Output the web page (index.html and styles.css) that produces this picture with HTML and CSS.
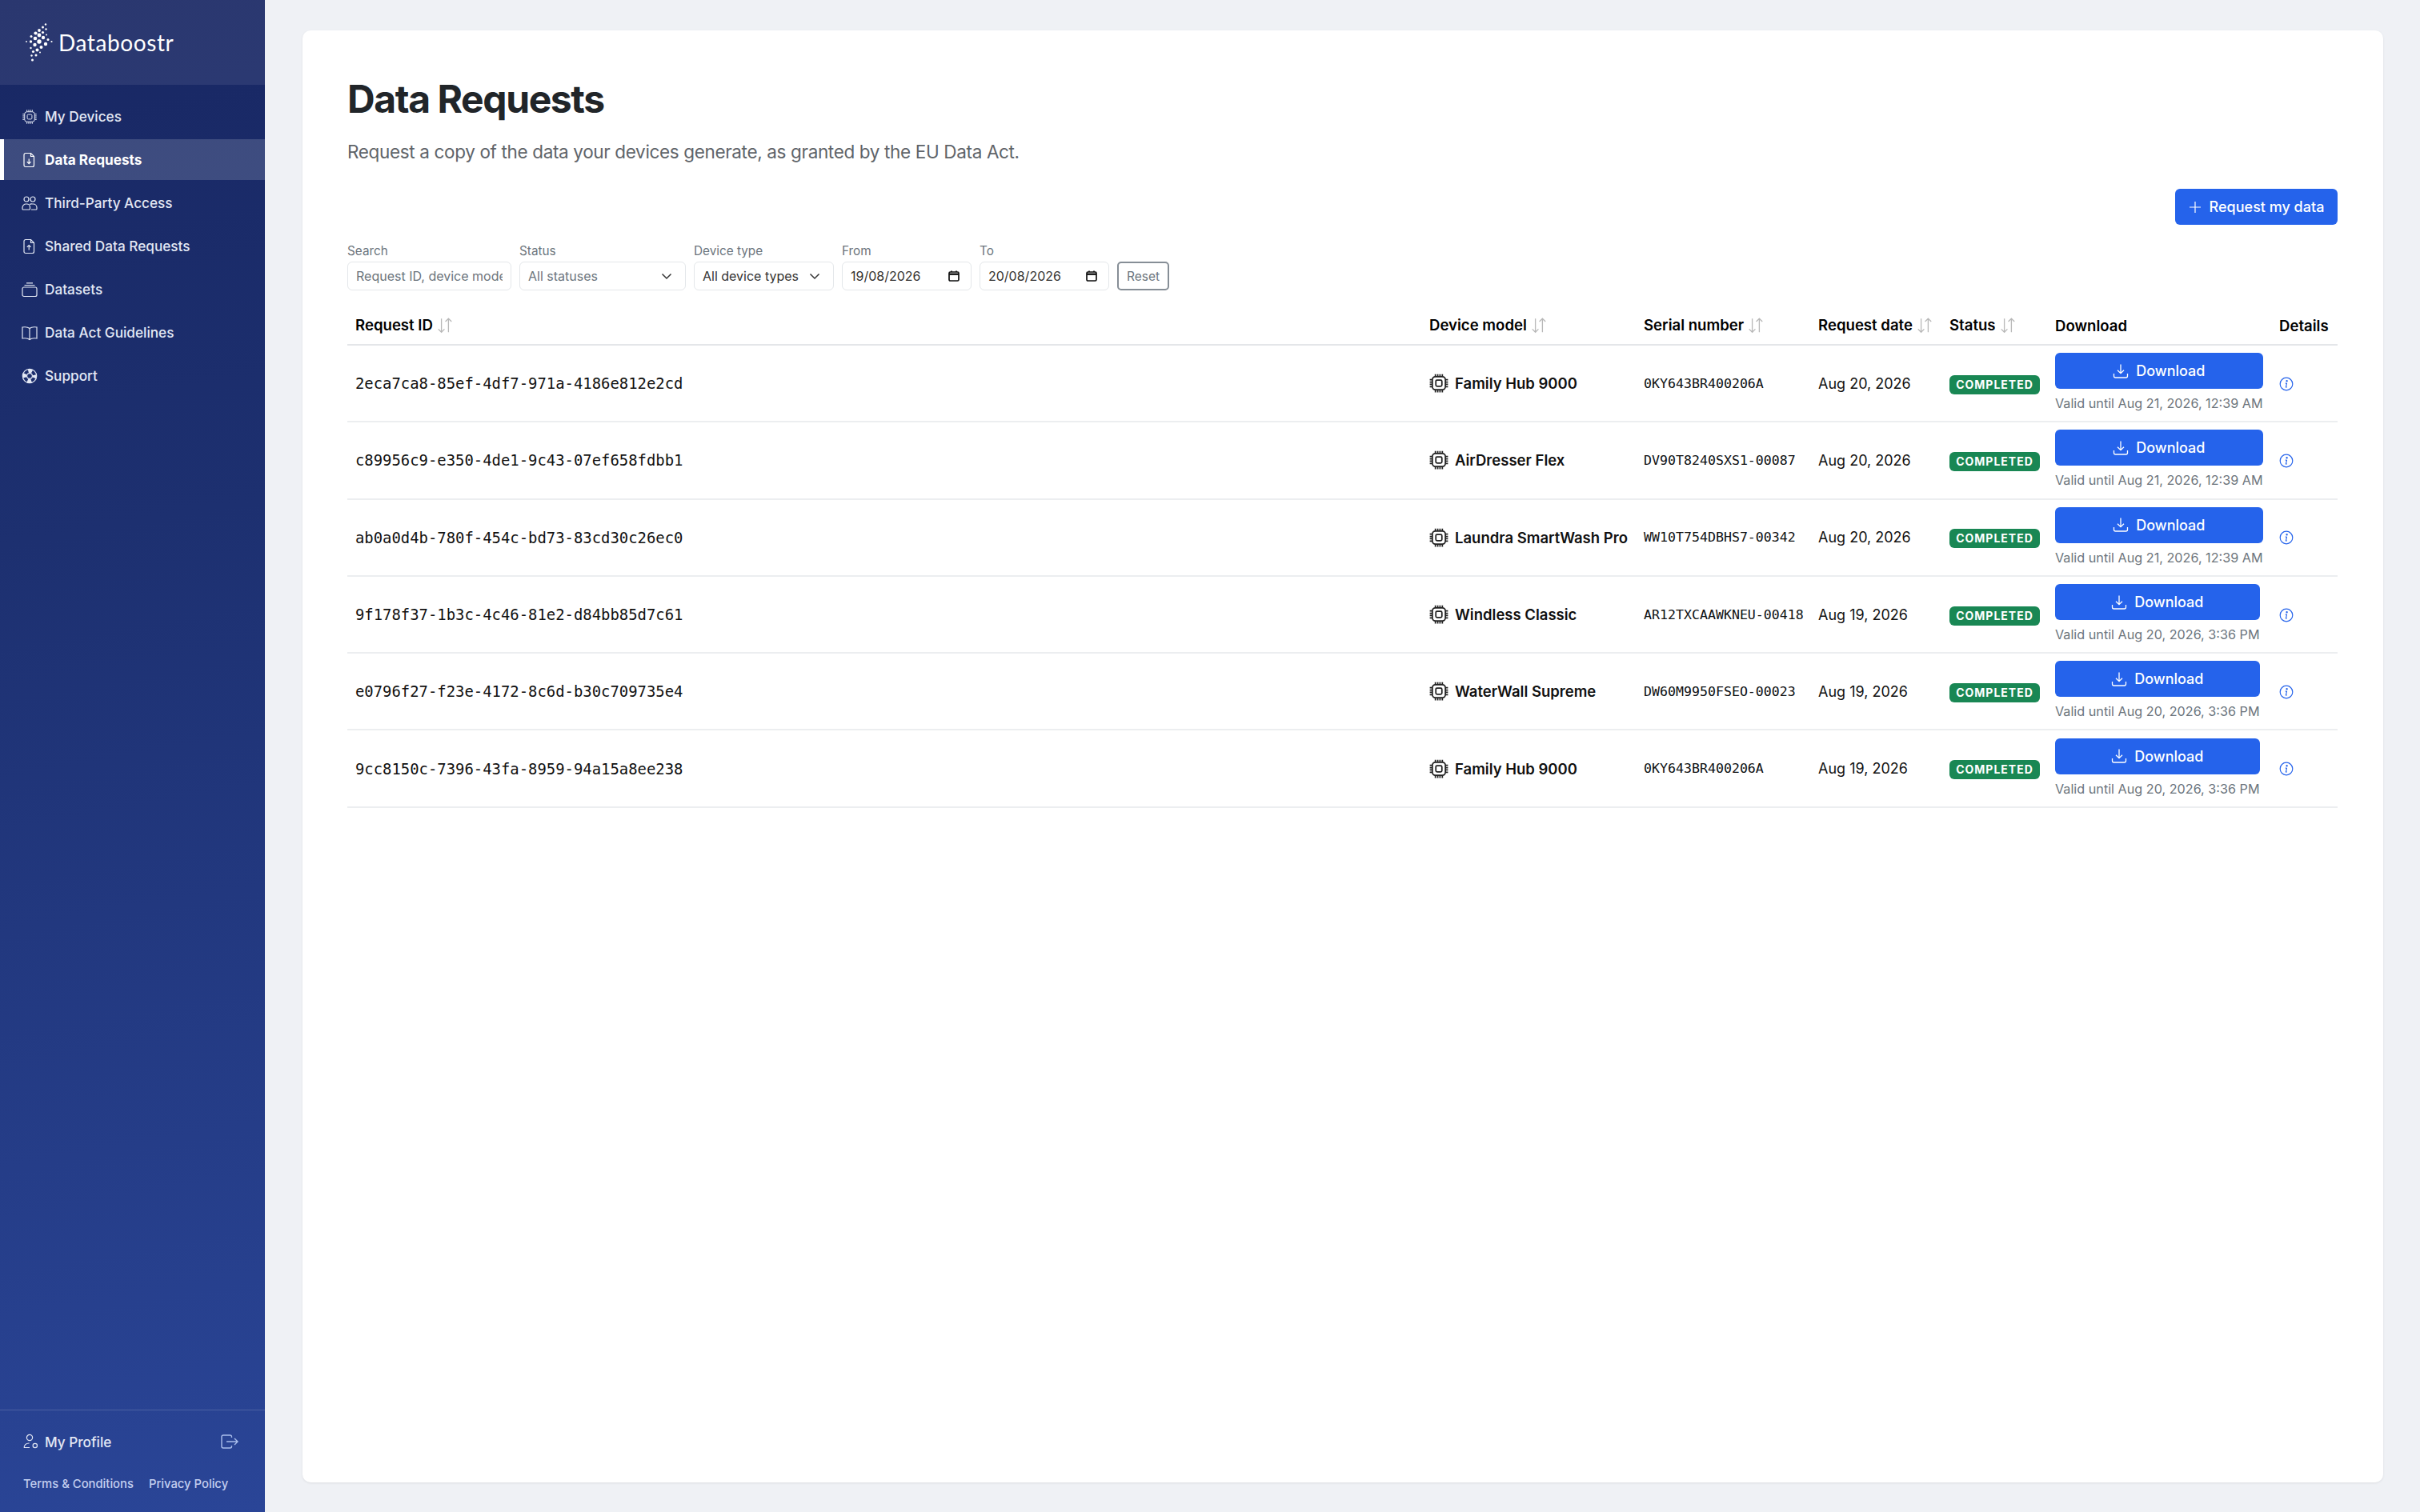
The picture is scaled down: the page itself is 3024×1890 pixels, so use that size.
FILE: index.html
```html
<!DOCTYPE html>
<html lang="en">
<head>
  <meta charset="UTF-8">
  <meta name="viewport" content="width=device-width, initial-scale=1.0">
  <title>Data Requests - Databoostr</title>
  <link rel="stylesheet" href="styles.css">
</head>
<body>
  <!-- Shared icons -->
  <svg class="sprite" aria-hidden="true">
    <symbol id="i-chip" viewBox="0 0 24 24">
      <rect x="4.5" y="4.5" width="15" height="15" rx="3.5"/>
      <rect x="8.5" y="8.5" width="7" height="7" rx="1.5"/>
      <path d="M8 1.5v3M10.7 1.5v3M13.3 1.5v3M16 1.5v3M8 19.5v3M10.7 19.5v3M13.3 19.5v3M16 19.5v3M1.5 8h3M1.5 10.7h3M1.5 13.3h3M1.5 16h3M19.5 8h3M19.5 10.7h3M19.5 13.3h3M19.5 16h3"/>
    </symbol>
    <symbol id="i-file-down" viewBox="0 0 20 20">
      <path d="M5 1.5h6.5l4 4v11a2 2 0 0 1-2 2H5a2 2 0 0 1-2-2v-13a2 2 0 0 1 2-2z"/>
      <path d="M11.5 1.5v4h4M9.2 8.5v6M6.8 12.2l2.4 2.4 2.4-2.4"/>
    </symbol>
    <symbol id="i-file-up" viewBox="0 0 20 20">
      <path d="M5 1.5h6.5l4 4v11a2 2 0 0 1-2 2H5a2 2 0 0 1-2-2v-13a2 2 0 0 1 2-2z"/>
      <path d="M11.5 1.5v4h4M9.2 14.5v-6M6.8 10.9l2.4-2.4 2.4 2.4"/>
    </symbol>
    <symbol id="i-people" viewBox="0 0 20 20">
      <circle cx="6" cy="5" r="3"/>
      <circle cx="14" cy="5" r="3"/>
      <path d="M1 17v-1.5a4.5 4.5 0 0 1 4.5-4.5h1a4 4 0 0 1 4 4V17a1 1 0 0 1-1 1H2a1 1 0 0 1-1-1zM10 11.5a4.500 4.500 0 0 1 3.500-.5h1a4.500 4.500 0 0 1 4.500 4.500V17a1 1 0 0 1-1 1h-6"/>
    </symbol>
    <symbol id="i-collection" viewBox="0 0 20 20">
      <rect x="1" y="7" width="18" height="11.5" rx="2"/>
      <path d="M3.5 4.5h13M6 1.8h8"/>
    </symbol>
    <symbol id="i-book" viewBox="0 0 20 20">
      <path d="M10 4.5C8 2.8 4.500 2.500 1 3v14c3.500-.5 7-.2 9 1.500 2-1.700 5.500-2 9-1.500V3c-3.500-.5-7-.2-9 1.500zM10 4.500v14"/>
    </symbol>
    <symbol id="i-support" viewBox="0 0 20 20">
      <circle cx="10" cy="10" r="8.7"/>
      <circle cx="10" cy="10" r="6.2" class="wedges"/>
      <circle cx="10" cy="10" r="3.4"/>
    </symbol>
    <symbol id="i-profile" viewBox="0 0 20 20">
      <circle cx="8" cy="5" r="3.6"/>
      <path d="M1 17.5c.5-3.500 3-5.500 6.500-5.500M1 17.500h7"/>
      <circle cx="14.8" cy="15" r="2.7"/>
    </symbol>
    <symbol id="i-logout" viewBox="0 0 22 18">
      <path d="M13.500 4V3a2 2 0 0 0-2-2H3a2 2 0 0 0-2 2v12a2 2 0 0 0 2 2h8.500a2 2 0 0 0 2-2v-1M7 9h14M17 5l4 4-4 4"/>
    </symbol>
    <symbol id="i-sort" viewBox="0 0 20 20">
      <path d="M6 2v15.500M2.500 14l3.500 3.500 3.500-3.500M14 17.500V2M10.500 5.500L14 2l3.500 3.500"/>
    </symbol>
    <symbol id="i-download" viewBox="0 0 20 20">
      <path d="M10 1.500v11M6 8.700l4 4 4-4M1.500 13v3a2 2 0 0 0 2 2h13a2 2 0 0 0 2-2v-3"/>
    </symbol>
    <symbol id="i-plus" viewBox="0 0 16 16">
      <path d="M8 1v14M1 8h14"/>
    </symbol>
    <symbol id="i-info" viewBox="0 0 18 18">
      <circle cx="9" cy="9" r="7.8"/>
      <path d="M9.500 8l-1 5M7.800 8.100h1.700M7.800 13h2"/>
      <circle cx="9.6" cy="5.3" r=".6"/>
    </symbol>
    <symbol id="i-chevron" viewBox="0 0 16 16">
      <path d="M2.500 5.500L8 11l5.500-5.500"/>
    </symbol>
    <symbol id="i-calendar" viewBox="0 0 16 16">
      <rect x="2" y="3" width="12" height="11" rx="1.5"/>
      <path d="M2 5.700h12" class="thick"/>
      <path d="M5 1.500V3M11 1.500V3"/>
    </symbol>
  </svg>

  <div class="layout">
    <aside class="sidebar">
      <div class="brand">
        <svg class="brand-mark" viewBox="0 0 34 48" aria-hidden="true">
          <circle cx="25" cy="1.5" r="1.2"/><circle cx="21.5" cy="5" r="1.5"/><circle cx="25.5" cy="7.5" r="1.2"/>
          <circle cx="17" cy="9" r="1.9"/><circle cx="21.5" cy="11.5" r="1.6"/><circle cx="12.5" cy="12.5" r="2.1"/>
          <circle cx="17" cy="15" r="2.4"/><circle cx="26" cy="14.5" r="1"/><circle cx="7" cy="16.5" r="1.5"/>
          <circle cx="22" cy="18" r="2.2"/><circle cx="12" cy="19" r="2.3"/><circle cx="28" cy="20.5" r="1.5"/>
          <circle cx="1" cy="23" r=".9"/><circle cx="6.5" cy="23" r="1.7"/><circle cx="17" cy="23" r="2.7"/>
          <circle cx="32.5" cy="23" r="1.1"/><circle cx="25" cy="26" r="2.2"/><circle cx="11.5" cy="27" r="2.2"/>
          <circle cx="19.5" cy="30" r="2"/><circle cx="6.5" cy="31" r="1.2"/><circle cx="14.5" cy="33.5" r="2"/>
          <circle cx="9.5" cy="35.5" r="1.6"/><circle cx="18" cy="36.5" r="1"/><circle cx="13" cy="40" r="1.5"/>
          <circle cx="7.5" cy="40.5" r="1.2"/><circle cx="8.5" cy="46" r="1.5"/>
        </svg>
        <span class="brand-name">Databoostr</span>
      </div>

      <nav class="nav">
        <a class="nav-item"><svg class="icon"><use href="#i-chip"/></svg>My Devices</a>
        <a class="nav-item active"><svg class="icon"><use href="#i-file-down"/></svg>Data Requests</a>
        <a class="nav-item"><svg class="icon"><use href="#i-people"/></svg>Third-Party Access</a>
        <a class="nav-item"><svg class="icon"><use href="#i-file-up"/></svg>Shared Data Requests</a>
        <a class="nav-item"><svg class="icon"><use href="#i-collection"/></svg>Datasets</a>
        <a class="nav-item"><svg class="icon"><use href="#i-book"/></svg>Data Act Guidelines</a>
        <a class="nav-item"><svg class="icon"><use href="#i-support"/></svg>Support</a>
      </nav>

      <div class="side-footer">
        <div class="profile-row">
          <a class="profile"><svg class="icon"><use href="#i-profile"/></svg>My Profile</a>
          <svg class="logout"><use href="#i-logout"/></svg>
        </div>
        <div class="legal">
          <a>Terms &amp; Conditions</a>
          <a>Privacy Policy</a>
        </div>
      </div>
    </aside>

    <main class="main">
      <section class="card">
        <h1>Data Requests</h1>
        <p class="lead">Request a copy of the data your devices generate, as granted by the EU Data Act.</p>

        <div class="actions">
          <button class="btn btn-request"><svg class="plus"><use href="#i-plus"/></svg>Request my data</button>
        </div>

        <!-- Filters -->
        <div class="filters">
          <div class="field field-search">
            <label for="search">Search</label>
            <input id="search" type="text" placeholder="Request ID, device model, serial">
          </div>
          <div class="field field-status">
            <label>Status</label>
            <div class="control muted">All statuses<svg class="chevron"><use href="#i-chevron"/></svg></div>
          </div>
          <div class="field field-type">
            <label>Device type</label>
            <div class="control">All device types<svg class="chevron"><use href="#i-chevron"/></svg></div>
          </div>
          <div class="field field-date">
            <label>From</label>
            <div class="control">19/08/2026<svg class="calendar"><use href="#i-calendar"/></svg></div>
          </div>
          <div class="field field-date">
            <label>To</label>
            <div class="control">20/08/2026<svg class="calendar"><use href="#i-calendar"/></svg></div>
          </div>
          <button class="btn-reset">Reset</button>
        </div>

        <table class="requests">
          <colgroup>
            <col class="c-id"><col class="c-model"><col class="c-serial"><col class="c-date"><col class="c-status"><col class="c-dl"><col class="c-info">
          </colgroup>
          <thead>
            <tr>
              <th>Request ID<svg class="sort"><use href="#i-sort"/></svg></th>
              <th>Device model<svg class="sort"><use href="#i-sort"/></svg></th>
              <th>Serial number<svg class="sort"><use href="#i-sort"/></svg></th>
              <th>Request date<svg class="sort"><use href="#i-sort"/></svg></th>
              <th>Status<svg class="sort"><use href="#i-sort"/></svg></th>
              <th>Download</th>
              <th>Details</th>
            </tr>
          </thead>
          <tbody>
            <tr>
              <td class="mono">2eca7ca8-85ef-4df7-971a-4186e812e2cd</td>
              <td><div class="model"><svg class="chip"><use href="#i-chip"/></svg>Family Hub 9000</div></td>
              <td class="serial">0KY643BR400206A</td>
              <td>Aug 20, 2026</td>
              <td><span class="badge">COMPLETED</span></td>
              <td><div class="dl"><button class="btn btn-dl"><svg class="dl-icon"><use href="#i-download"/></svg>Download</button><span class="valid">Valid until Aug 21, 2026, 12:39 AM</span></div></td>
              <td><svg class="info"><use href="#i-info"/></svg></td>
            </tr>
            <tr>
              <td class="mono">c89956c9-e350-4de1-9c43-07ef658fdbb1</td>
              <td><div class="model"><svg class="chip"><use href="#i-chip"/></svg>AirDresser Flex</div></td>
              <td class="serial">DV90T8240SXS1-00087</td>
              <td>Aug 20, 2026</td>
              <td><span class="badge">COMPLETED</span></td>
              <td><div class="dl"><button class="btn btn-dl"><svg class="dl-icon"><use href="#i-download"/></svg>Download</button><span class="valid">Valid until Aug 21, 2026, 12:39 AM</span></div></td>
              <td><svg class="info"><use href="#i-info"/></svg></td>
            </tr>
            <tr>
              <td class="mono">ab0a0d4b-780f-454c-bd73-83cd30c26ec0</td>
              <td><div class="model"><svg class="chip"><use href="#i-chip"/></svg>Laundra SmartWash Pro</div></td>
              <td class="serial">WW10T754DBHS7-00342</td>
              <td>Aug 20, 2026</td>
              <td><span class="badge">COMPLETED</span></td>
              <td><div class="dl"><button class="btn btn-dl"><svg class="dl-icon"><use href="#i-download"/></svg>Download</button><span class="valid">Valid until Aug 21, 2026, 12:39 AM</span></div></td>
              <td><svg class="info"><use href="#i-info"/></svg></td>
            </tr>
            <tr>
              <td class="mono">9f178f37-1b3c-4c46-81e2-d84bb85d7c61</td>
              <td><div class="model"><svg class="chip"><use href="#i-chip"/></svg>Windless Classic</div></td>
              <td class="serial">AR12TXCAAWKNEU-00418</td>
              <td>Aug 19, 2026</td>
              <td><span class="badge">COMPLETED</span></td>
              <td><div class="dl"><button class="btn btn-dl"><svg class="dl-icon"><use href="#i-download"/></svg>Download</button><span class="valid">Valid until Aug 20, 2026, 3:36 PM</span></div></td>
              <td><svg class="info"><use href="#i-info"/></svg></td>
            </tr>
            <tr>
              <td class="mono">e0796f27-f23e-4172-8c6d-b30c709735e4</td>
              <td><div class="model"><svg class="chip"><use href="#i-chip"/></svg>WaterWall Supreme</div></td>
              <td class="serial">DW60M9950FSEO-00023</td>
              <td>Aug 19, 2026</td>
              <td><span class="badge">COMPLETED</span></td>
              <td><div class="dl"><button class="btn btn-dl"><svg class="dl-icon"><use href="#i-download"/></svg>Download</button><span class="valid">Valid until Aug 20, 2026, 3:36 PM</span></div></td>
              <td><svg class="info"><use href="#i-info"/></svg></td>
            </tr>
            <tr>
              <td class="mono">9cc8150c-7396-43fa-8959-94a15a8ee238</td>
              <td><div class="model"><svg class="chip"><use href="#i-chip"/></svg>Family Hub 9000</div></td>
              <td class="serial">0KY643BR400206A</td>
              <td>Aug 19, 2026</td>
              <td><span class="badge">COMPLETED</span></td>
              <td><div class="dl"><button class="btn btn-dl"><svg class="dl-icon"><use href="#i-download"/></svg>Download</button><span class="valid">Valid until Aug 20, 2026, 3:36 PM</span></div></td>
              <td><svg class="info"><use href="#i-info"/></svg></td>
            </tr>
          </tbody>
        </table>
      </section>
    </main>
  </div>
</body>
</html>
```

FILE: styles.css
```css
* {
  box-sizing: border-box;
}

body {
  font-family: Inter, "Liberation Sans", sans-serif;
  margin: 0;
  background-color: #eff1f5;
  color: #111;
}

.sprite {
  display: none;
}

.layout {
  display: flex;
  height: 1890px;
}

/* Sidebar */
.sidebar {
  width: 331px;
  flex-shrink: 0;
  display: flex;
  flex-direction: column;
  color: #e3e8f4;
  background: linear-gradient(170deg, #182763 0%, #1d3070 35%, #2a4597 100%);
}

.brand {
  height: 106px;
  display: flex;
  align-items: center;
  gap: 7px;
  padding-left: 32px;
  background-color: rgba(255, 255, 255, 0.08);
}

.brand-mark {
  width: 34px;
  height: 48px;
  fill: #fff;
}

.brand-name {
  font-family: Lato, sans-serif;
  font-size: 28px;
  letter-spacing: 0.6px;
  color: #fff;
}

.nav {
  display: flex;
  flex-direction: column;
  gap: 3px;
  padding-top: 14px;
}

.icon {
  width: 20px;
  height: 20px;
  flex-shrink: 0;
  fill: none;
  stroke: currentColor;
  stroke-width: 1.2;
}

.wedges {
  stroke-width: 4.6;
  stroke-dasharray: 4.87 4.87;
  stroke-dashoffset: 2.43;
}

.nav-item {
  height: 51px;
  display: flex;
  align-items: center;
  gap: 9px;
  padding-left: 27px;
  font-size: 17.2px;
  font-weight: 500;
}

.nav-item.active {
  background-color: rgba(255, 255, 255, 0.16);
  border-left: 5px solid #fff;
  padding-left: 22px;
  color: #fff;
  font-weight: 700;
}

.side-footer {
  margin-top: auto;
  border-top: 1px solid rgba(255, 255, 255, 0.16);
  padding: 26px 33px 26px 29px;
}

.profile-row {
  display: flex;
  align-items: center;
  justify-content: space-between;
  height: 26px;
}

.profile {
  display: flex;
  align-items: center;
  gap: 7px;
  font-size: 17.2px;
  font-weight: 500;
}

.logout {
  width: 22px;
  height: 18px;
  fill: none;
  stroke: #a9bdec;
  stroke-width: 1.4;
}

.legal {
  display: flex;
  gap: 19px;
  margin-top: 31px;
  font-size: 14.8px;
  font-weight: 500;
  color: #c3cff0;
}

/* Main card */
.main {
  flex: 1;
  padding: 38px 47px 37px;
}

.card {
  height: 100%;
  background-color: #fff;
  border-radius: 10px;
  box-shadow: 0 1px 3px rgba(0, 0, 0, 0.08);
  padding: 56px 57px 0 56px;
}

h1 {
  margin: 0;
  font-size: 48px;
  line-height: 60px;
  font-weight: 700;
  letter-spacing: -1.4px;
  color: #212529;
}

.lead {
  margin: 20px 0 0;
  font-size: 22.5px;
  line-height: 32px;
  letter-spacing: -0.35px;
  color: #5f6469;
}

.actions {
  display: flex;
  justify-content: flex-end;
  margin-top: 30px;
}

.btn {
  border: 0;
  border-radius: 6px;
  background-color: #2563eb;
  color: #fff;
  font-family: inherit;
  font-weight: 500;
  display: flex;
  align-items: center;
  justify-content: center;
}

.btn-request {
  width: 203px;
  height: 45px;
  font-size: 18px;
  gap: 10px;
}

.plus {
  width: 16px;
  height: 16px;
  fill: none;
  stroke: #fff;
  stroke-width: 1.2;
}

/* Filters */
.filters {
  display: flex;
  align-items: flex-end;
  gap: 10px;
  margin-top: 23px;
}

.field label {
  display: block;
  height: 20px;
  margin-bottom: 3px;
  font-size: 15.3px;
  line-height: 20px;
  color: #6c757d;
}

.field input,
.control {
  width: 100%;
  height: 36px;
  border: 1px solid #e4e7ea;
  border-radius: 6px;
  font-family: inherit;
  font-size: 16px;
  color: #333;
  background-color: #fff;
  padding: 0 10px;
}

.field input::placeholder,
.muted {
  color: #6c757d;
}

.control {
  display: flex;
  align-items: center;
  justify-content: space-between;
}

.field-search {
  width: 205px;
}

.field-status {
  width: 208px;
}

.field-type {
  width: 175px;
}

.field-date {
  width: 162px;
}

.chevron {
  width: 16px;
  height: 16px;
  margin-right: 5px;
  fill: none;
  stroke: #333;
  stroke-width: 1.5;
}

.calendar {
  width: 16px;
  height: 16px;
  margin-right: 3px;
  fill: none;
  stroke: #111;
  stroke-width: 1.7;
}

.thick {
  stroke-width: 2.4;
}

.btn-reset {
  width: 65px;
  height: 36px;
  border: 2px solid #868e96;
  border-radius: 5px;
  background-color: #fff;
  font-family: inherit;
  font-size: 15.5px;
  color: #6c757d;
  padding: 0;
}

/* Table */
.requests {
  width: 100%;
  margin-top: 20px;
  border-collapse: collapse;
  table-layout: fixed;
  font-size: 18px;
}

.c-id { width: 1342px; }
.c-model { width: 268px; }
.c-serial { width: 218px; }
.c-date { width: 164px; }
.c-status { width: 132px; }
.c-dl { width: 280px; }
.c-info { width: 83px; }

.requests th {
  height: 48px;
  padding: 0 10px;
  text-align: left;
  white-space: nowrap;
  font-size: 18.6px;
  font-weight: 600;
  color: #000;
  border-bottom: 2px solid #e4e6e9;
}

.requests td {
  height: 96.3px;
  padding: 0 10px;
  white-space: nowrap;
  color: #111;
  border-bottom: 2px solid #eceef0;
}

.sort {
  width: 22px;
  height: 22px;
  margin-left: 4px;
  vertical-align: -5px;
  fill: none;
  stroke: #b8b8b8;
  stroke-width: 1.2;
}

.requests .mono {
  font-family: "DejaVu Sans Mono", monospace;
  font-size: 18.9px;
}

.requests .serial {
  font-family: "DejaVu Sans Mono", monospace;
  font-size: 16.6px;
}

.model {
  display: flex;
  align-items: center;
  gap: 7px;
  font-size: 18.5px;
  font-weight: 600;
}

.chip {
  width: 26px;
  height: 26px;
  margin-left: -1px;
  fill: none;
  stroke: #222;
  stroke-width: 1.6;
}

.badge {
  display: block;
  width: 113px;
  height: 24px;
  margin-top: 3px;
  border-radius: 6px;
  background-color: #198754;
  color: #fff;
  font-size: 14px;
  font-weight: 700;
  line-height: 24px;
  letter-spacing: 1px;
  text-align: center;
}

.dl {
  display: inline-flex;
  flex-direction: column;
  gap: 8px;
  margin-bottom: 3px;
  vertical-align: middle;
}

.btn-dl {
  height: 45px;
  gap: 9px;
  font-size: 18px;
}

.dl-icon {
  width: 20px;
  height: 20px;
  fill: none;
  stroke: #fff;
  stroke-width: 1.3;
}

.valid {
  font-size: 16.2px;
  line-height: 20px;
  color: #6c757d;
}

.info {
  width: 18px;
  height: 18px;
  vertical-align: -3px;
  fill: none;
  stroke: #2563eb;
  stroke-width: 1.2;
}
```
